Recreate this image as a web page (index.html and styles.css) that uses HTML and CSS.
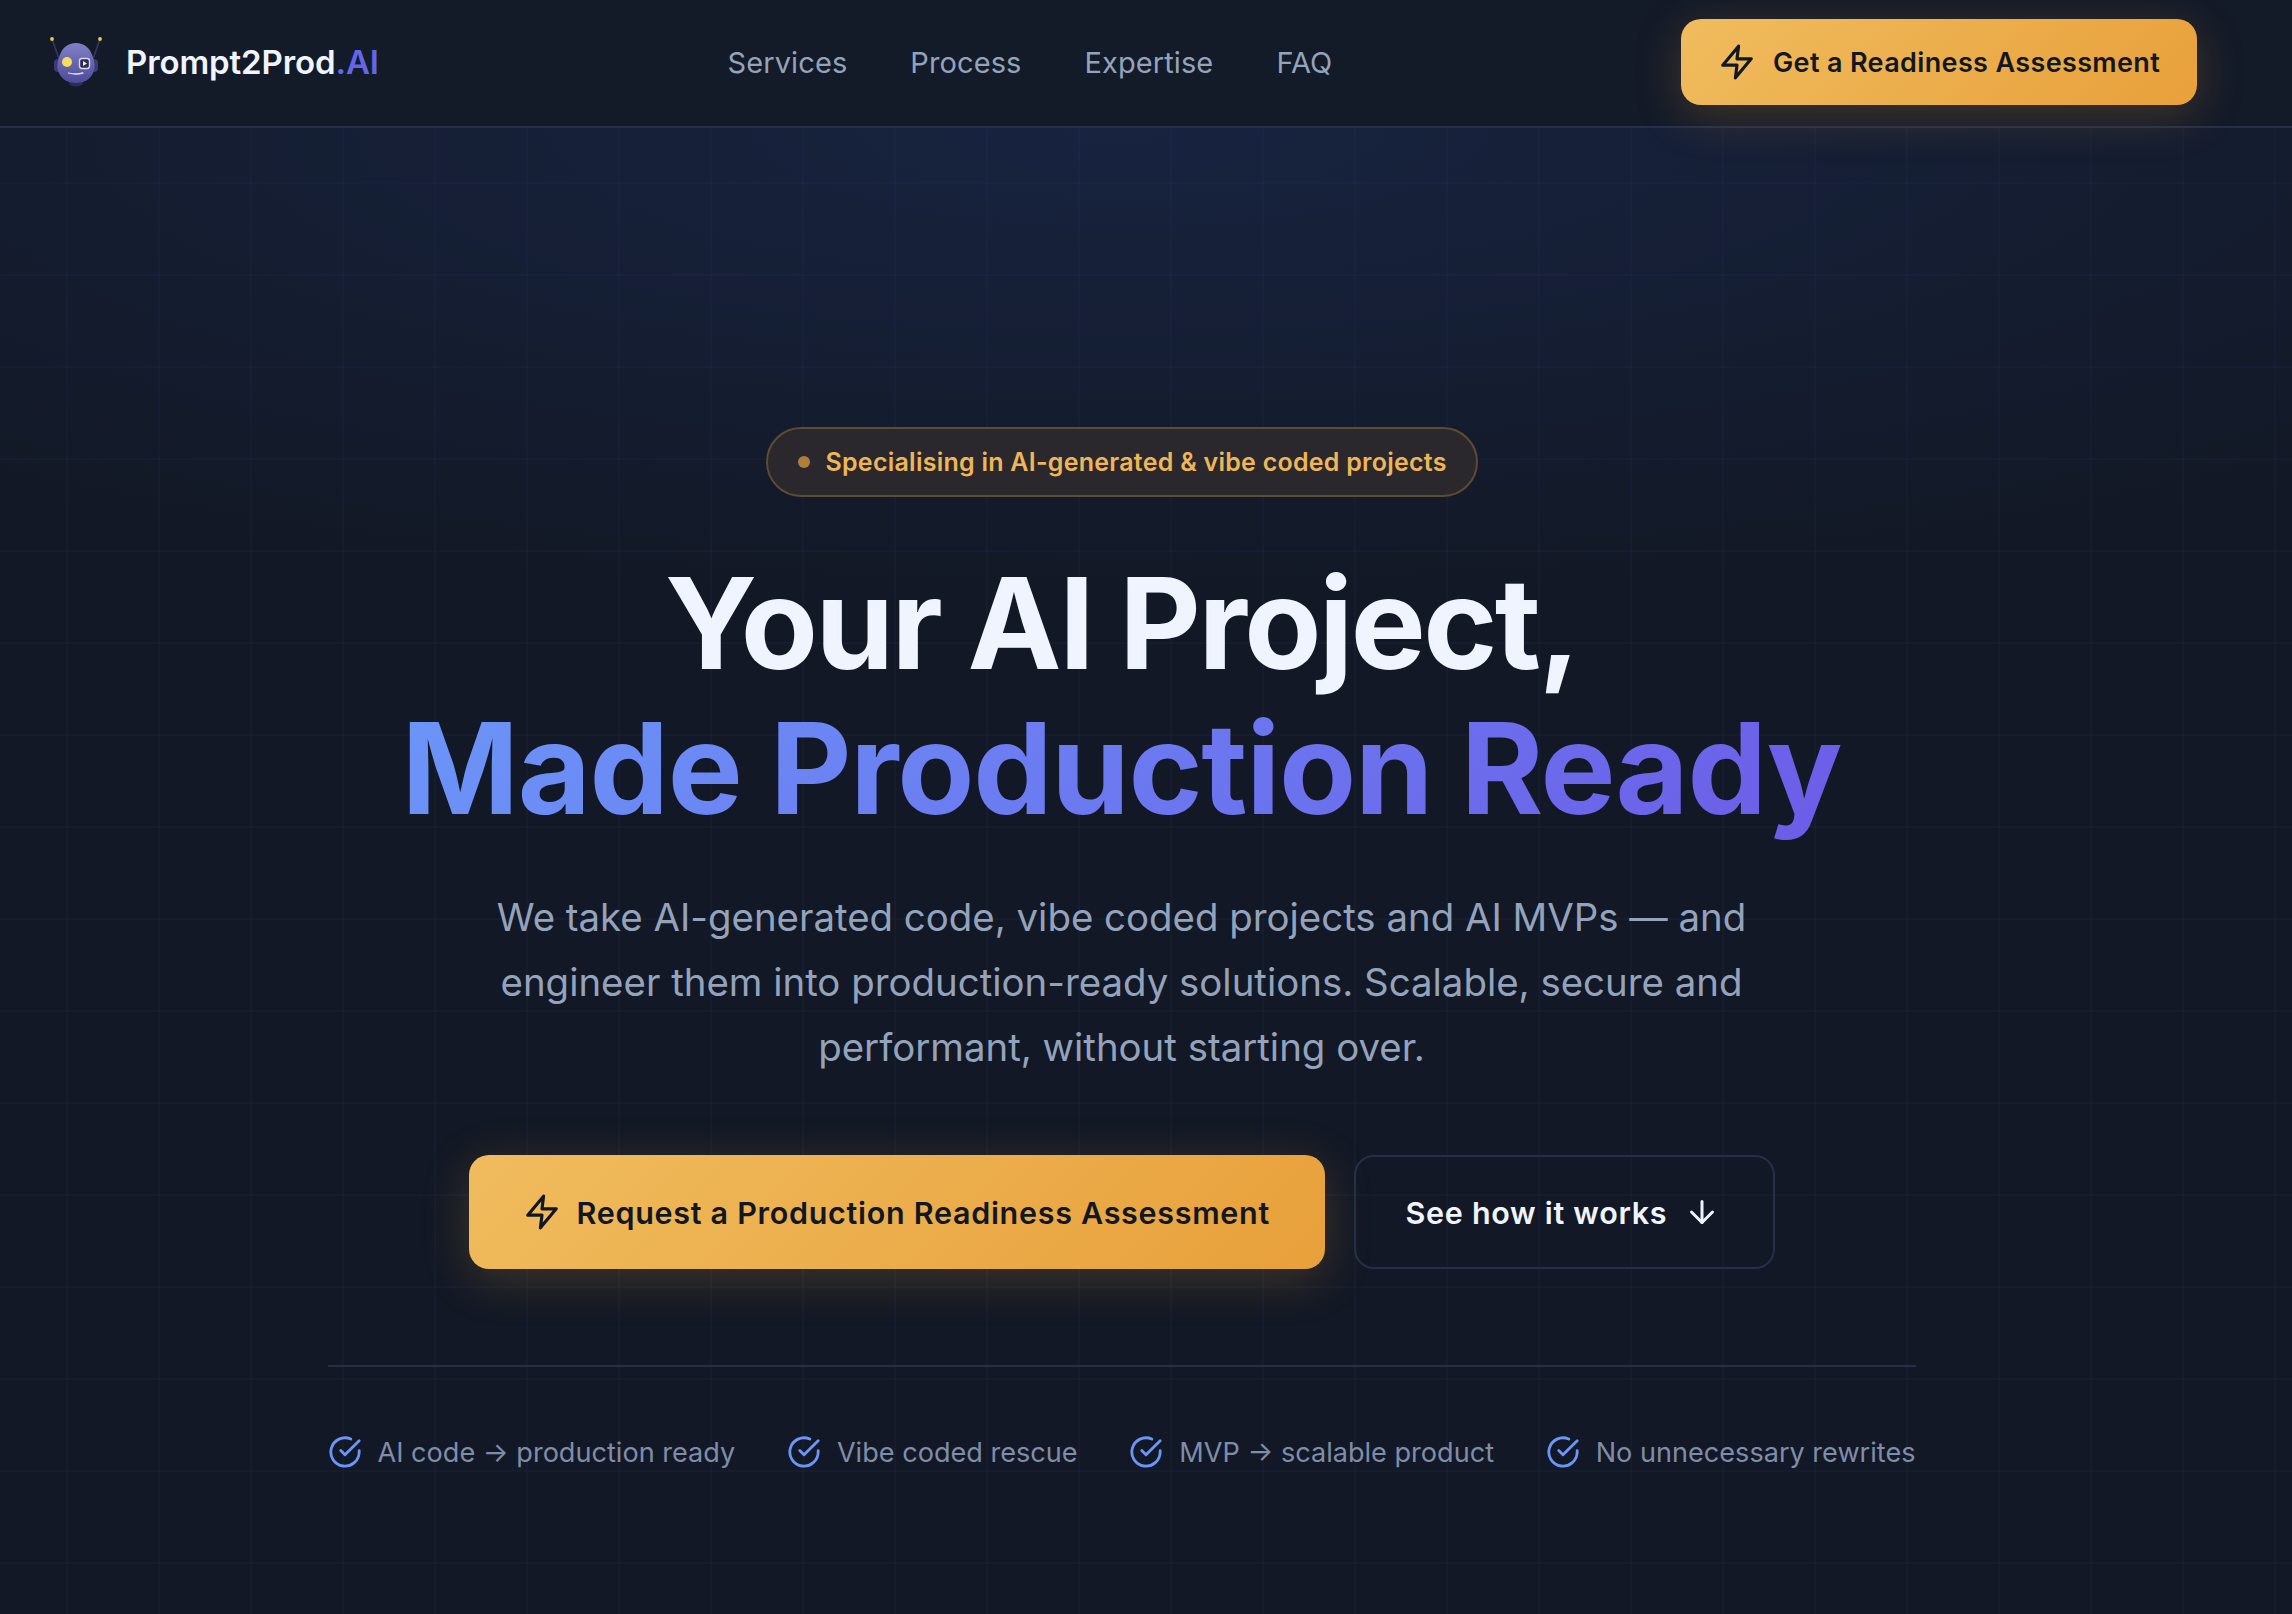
FILE: index.html
```html
<!DOCTYPE html>
<html lang="en">
<head>
<meta charset="utf-8">
<title>Prompt2Prod.AI</title>
<link rel="stylesheet" href="styles.css">
</head>
<body>
<div class="page">
  <header class="nav">
    <a class="brand" href="#">
      <svg class="robot" viewBox="0 0 56 54" aria-hidden="true">
        <defs>
          <linearGradient id="head" x1="0" y1="0" x2="0" y2="1">
            <stop offset="0" stop-color="#8080c6"/>
            <stop offset="1" stop-color="#4e4a9a"/>
          </linearGradient>
        </defs>
        <path d="M4 4 L11 24 M52 4 L45 24" stroke="#38356a" stroke-width="1.6" fill="none"/>
        <circle cx="4" cy="4" r="1.9" fill="#f2c94c"/>
        <circle cx="52" cy="4" r="1.9" fill="#f2c94c"/>
        <rect x="6" y="24" width="8" height="13" rx="4" fill="#3d3a72"/>
        <rect x="42" y="24" width="8" height="13" rx="4" fill="#3d3a72"/>
        <ellipse cx="28" cy="48" rx="7" ry="3.6" fill="#2e2b5a"/>
        <path d="M28 8 C36 8 42 13 44.500 21 C47 28 47.500 33 45 38 C42 45 35 48 28 48 C21 48 14 45 11 38 C8.500 33 9 28 11.500 21 C14 13 20 8 28 8 Z" fill="url(#head)"/>
        <circle cx="19" cy="27" r="5" fill="#f8dc5c"/>
        <rect x="31.500" y="23.500" width="10" height="10" rx="2.400" fill="#2d2a55" stroke="#d6d8f0" stroke-width="1.400"/>
        <path d="M35 26 L39 28.500 L35 31 Z" fill="#e8eaf8"/>
        <path d="M20.500 38 Q27.500 40 35 38" stroke="#e4e6f8" stroke-width="1.300" fill="none" stroke-linecap="round"/>
      </svg>
      <span class="brand-name">Prompt2Prod<span class="brand-tld">.AI</span></span>
    </a>
    <nav class="links">
      <a href="#">Services</a>
      <a href="#">Process</a>
      <a href="#">Expertise</a>
      <a href="#">FAQ</a>
    </nav>
    <a class="btn btn-primary btn-nav" href="#">
      <svg class="icon icon-zap" viewBox="0 0 24 24"><path d="M13 2 3 14h9l-1 8 10-12h-9l1-8z"/></svg>
      <span>Get a Readiness Assessment</span>
    </a>
  </header>
  <main class="hero">
    <div class="pill"><span class="dot"></span>Specialising in AI-generated &amp; vibe coded projects</div>
    <h1><span class="line line-white">Your AI Project,</span><span class="line grad">Made Production Ready</span></h1>
    <p class="lead">We take AI-generated code, vibe coded projects and AI MVPs — and engineer them into production-ready solutions. Scalable, secure and performant, without starting over.</p>
    <div class="actions">
      <a class="btn btn-primary btn-big" href="#">
        <svg class="icon icon-zap" viewBox="0 0 24 24"><path d="M13 2 3 14h9l-1 8 10-12h-9l1-8z"/></svg>
        <span>Request a Production Readiness Assessment</span>
      </a>
      <a class="btn btn-ghost btn-big" href="#">
        <span>See how it works</span>
        <svg class="icon icon-arrow" viewBox="0 0 24 24"><path d="M12 5v14"/><path d="m19 12-7 7-7-7"/></svg>
      </a>
    </div>
    <ul class="checks">
      <li><svg class="icon icon-check" viewBox="0 0 24 24"><path d="M22 11.080V12a10 10 0 1 1-5.930-9.140"/><path d="m9 11 3 3L22 4"/></svg>AI code → production ready</li>
      <li><svg class="icon icon-check" viewBox="0 0 24 24"><path d="M22 11.080V12a10 10 0 1 1-5.930-9.140"/><path d="m9 11 3 3L22 4"/></svg>Vibe coded rescue</li>
      <li><svg class="icon icon-check" viewBox="0 0 24 24"><path d="M22 11.080V12a10 10 0 1 1-5.930-9.140"/><path d="m9 11 3 3L22 4"/></svg>MVP → scalable product</li>
      <li><svg class="icon icon-check" viewBox="0 0 24 24"><path d="M22 11.080V12a10 10 0 1 1-5.930-9.140"/><path d="m9 11 3 3L22 4"/></svg>No unnecessary rewrites</li>
    </ul>
  </main>
</div>
</body>
</html>
```
FILE: styles.css
```css
* { box-sizing: border-box; }
html, body { margin: 0; padding: 0; }
body {
  background: #121825;
  color: #f0f4ff;
  font-family: Inter, "Liberation Sans", sans-serif;
  width: 2292px;
  height: 1614px;
  overflow: hidden;
}
a { color: inherit; text-decoration: none; }
.page {
  min-height: 1614px;
  background-color: #121825;
  background-image:
    linear-gradient(rgba(70, 90, 180, 0.06) 2px, transparent 2px),
    linear-gradient(90deg, rgba(70, 90, 180, 0.06) 2px, transparent 2px),
    radial-gradient(ellipse 1800px 480px at 1121px 128px, rgba(30, 50, 100, 0.42), rgba(30, 50, 100, 0) 100%);
  background-size: 92px 92px, 92px 92px, auto;
  background-position: 66px 90px, 66px 90px, 0 0;
}
.nav {
  height: 128px;
  border-bottom: 2px solid #252f48;
  background: #131a28;
  display: flex;
  align-items: center;
  justify-content: space-between;
  padding: 0 95px 2px 48px;
}
.brand { display: flex; align-items: center; gap: 22px; }
.robot { width: 56px; height: 54px; display: block; overflow: visible; }
.brand-name { font-size: 33px; font-weight: 600; color: #f0f4ff; letter-spacing: -0.1px; }
.brand-tld { color: #6366e8; }
.links { display: flex; gap: 63px; font-size: 29px; letter-spacing: 0.1px; color: #94a3bc; }
.btn {
  display: flex;
  align-items: center;
  border-radius: 20px;
  font-weight: 600;
  white-space: nowrap;
}
.btn-primary {
  background: linear-gradient(135deg, #f0bc5e, #e8a03a);
  color: #111825;
  box-shadow: 0 10px 48px rgba(232, 160, 58, 0.22);
}
.icon { fill: none; stroke: currentColor; stroke-width: 2; stroke-linecap: round; stroke-linejoin: round; flex: none; display: block; }
.btn-nav { width: 516px; height: 86px; padding: 0 37px; gap: 17px; font-size: 27px; letter-spacing: 0.36px; }
.btn-nav .icon { width: 38px; height: 38px; }
.hero {
  width: 2243px;
  display: flex;
  flex-direction: column;
  align-items: center;
  padding-top: 299px;
}
.pill {
  height: 70px;
  width: 712px;
  border: 2px solid #5f4b31;
  border-radius: 35px;
  background: #2a282c;
  display: flex;
  align-items: center;
  padding-left: 30px;
  gap: 16px;
  font-size: 25px;
  letter-spacing: 0.25px;
  font-weight: 600;
  color: #eeb658;
}
.dot { width: 12px; height: 12px; border-radius: 50%; background: #ae7e3c; }
h1 { margin: 54px 0 0; font-size: 126px; line-height: 145px; font-weight: 700; text-align: center; letter-spacing: -1.3px; color: #f0f4ff; }
.line { display: block; }
.line-white { letter-spacing: -2.5px; }
.grad {
  background: linear-gradient(135deg, #6b96f8, #6c5ce7);
  -webkit-background-clip: text;
  background-clip: text;
  color: transparent;
}
.lead {
  width: 1290px;
  margin: 44px 0 0;
  font-size: 38.400px;
  line-height: 65px;
  text-align: center;
  color: #94a3bc;
}
.actions { display: flex; gap: 29px; margin-top: 75px; }
.btn-big { height: 114px; font-size: 30.500px; letter-spacing: 0.7px; }
.btn-primary.btn-big { width: 856px; padding: 0 54px; gap: 16px; }
.btn-primary.btn-big .icon { width: 38px; height: 38px; }
.btn-ghost { width: 421px; padding: 0 50px; gap: 17px; border: 2px solid #252f48; color: #f0f4ff; }
.btn-ghost .icon { width: 36px; height: 36px; }
.checks {
  list-style: none;
  margin: 96px 0 0;
  padding: 68px 0 0;
  width: 1588px;
  border-top: 2px solid #252f48;
  display: flex;
  justify-content: space-between;
  font-size: 27.100px;
  color: #7f8dab;
}
.checks li { display: flex; align-items: center; gap: 16px; }
.icon-check { width: 34px; height: 34px; color: #6b96f8; }
```
